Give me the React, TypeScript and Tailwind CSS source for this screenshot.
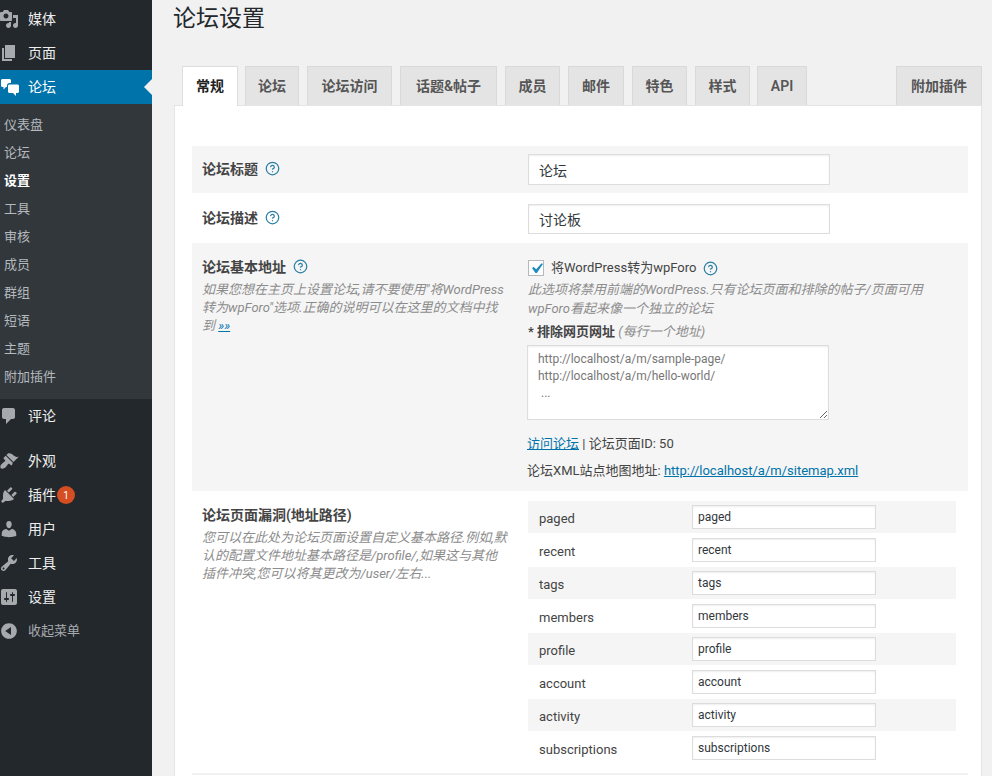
import { CircleHelp } from 'lucide-react'

const font = 'font-["Roboto","Noto_Sans_CJK_SC",sans-serif]'

const iconPaths: Record<string, string> = {
  media:
    'M13 11V4c0-.55-.45-1-1-1h-1.67L9 1H5L3.67 3H2c-.55 0-1 .45-1 1v7c0 .55.45 1 1 1h10c.55 0 1-.45 1-1zM7 4.500c1.380 0 2.500 1.120 2.500 2.500S8.380 9.500 7 9.500 4.500 8.380 4.500 7 5.620 4.500 7 4.500zM14 6h5v10.500c0 1.380-1.120 2.500-2.500 2.500S14 17.880 14 16.500s1.120-2.500 2.500-2.500c.17 0 .34.02.5.05V9h-3V6zm-4 8.050V13h2v3.500c0 1.380-1.120 2.500-2.500 2.500S7 17.880 7 16.500 8.120 14 9.500 14c.17 0 .34.02.5.05z',
  page: 'M6 15V2h10v13H6zm-1 1h8v2H3V5h2v11z',
  comments: 'M5 2h9c1.100 0 2 .9 2 2v7c0 1.100-.9 2-2 2h-2l-5 5v-5H5c-1.100 0-2-.9-2-2V4c0-1.100.9-2 2-2z',
  appearance:
    'M14.480 11.060L7.410 3.990l1.500-1.500c.5-.56 2.300-.47 3.510.32 1.210.8 1.430 1.280 2.910 2.100 1.180.64 2.450 1.260 4.450.85zm-.71.71L6.700 4.700 4.930 6.470c-.39.39-.39 1.020 0 1.410l1.060 1.060c.39.39.39 1.030 0 1.420-.6.6-1.430 1.110-2.210 1.690-.35.26-.7.53-1.010.84C1.430 13.710.960 15.910 1.670 17.330c1.420.71 3.620.24 4.960-1.100.31-.31.58-.66.84-1.010.58-.78 1.090-1.610 1.690-2.210.39-.39 1.030-.39 1.420 0l1.060 1.060c.39.39 1.020.39 1.410 0z',
  plugins:
    'M13.110 4.360L9.870 7.600 8 5.730l3.240-3.240c.35-.34 1.050-.2 1.560.32.52.51.66 1.210.31 1.550zm-8 1.770l.91-1.120 9.010 9.010-1.190.84c-.71.71-2.630 1.160-3.820 1.160H6.140L4.900 17.260c-.59.59-1.540.59-2.120 0-.59-.58-.59-1.530 0-2.120l1.240-1.240v-3.880c0-1.130.4-3.190 1.090-3.890zm7.260 3.970l3.240-3.240c.34-.35 1.040-.21 1.550.31.52.51.66 1.210.31 1.550l-3.240 3.250z',
  users:
    'M10 9.250c-2.270 0-2.730-3.440-2.730-3.440C7 4.020 7.820 2 9.970 2c2.160 0 2.980 2.020 2.710 3.810 0 0-.41 3.440-2.680 3.440zm0 2.570L12.720 10c2.390 0 4.520 2.330 4.520 4.530v2.490s-3.650 1.130-7.240 1.130c-3.650 0-7.240-1.130-7.240-1.130v-2.490c0-2.250 1.940-4.480 4.470-4.480z',
  tools:
    'M16.680 9.770c-1.340 1.340-3.300 1.670-4.950.99l-5.410 6.520c-.99.99-2.590.99-3.580 0s-.99-2.590 0-3.570l6.520-5.420c-.68-1.650-.35-3.610.99-4.950 1.280-1.280 3.120-1.620 4.720-1.060l-2.890 2.890 2.820 2.820 2.860-2.870c.53 1.580.18 3.390-1.080 4.650zM3.810 16.210c.4.39 1.040.39 1.430 0 .4-.4.4-1.040 0-1.430-.39-.4-1.030-.4-1.430 0-.39.39-.39 1.030 0 1.430z',
  settings:
    'M18 16V4c0-1.100-.9-2-2-2H4c-1.100 0-2 .9-2 2v12c0 1.100.9 2 2 2h12c1.100 0 2-.9 2-2zM8 11h1c.55 0 1 .45 1 1s-.45 1-1 1H8v1.500c0 .28-.22.5-.5.5s-.5-.22-.5-.5V13H6c-.55 0-1-.45-1-1s.45-1 1-1h1V5.500c0-.28.22-.5.5-.5s.5.22.5.5V11zm5-2h-1c-.55 0-1-.45-1-1s.45-1 1-1h1V5.500c0-.28.22-.5.5-.5s.5.22.5.5V7h1c.55 0 1 .45 1 1s-.45 1-1 1h-1v5.500c0 .28-.22.5-.5.5s-.5-.22-.5-.5V9z',
  collapse:
    'M10 2.160c4.330 0 7.840 3.510 7.840 7.840s-3.510 7.840-7.840 7.840S2.160 14.330 2.160 10 5.670 2.160 10 2.160zm2 11.720V6.120L6.180 9.990z',
  forum:
    'M2 3.500C2 2.700 2.700 2 3.500 2h7c.8 0 1.500.7 1.500 1.500V6H10.500C9.100 6 8 7.100 8 8.500V10H7l-2.500 2.500V10h-1C2.700 10 2 9.300 2 8.500zM10.500 7.500h8c.8 0 1.500.7 1.500 1.500v5.500c0 .8-.7 1.500-1.500 1.500H17v3l-3-3h-3.500C9.700 16 9 15.300 9 14.500V9c0-.8.7-1.500 1.500-1.500z',
}

function MenuIcon({ name, color = 'text-[#a7aaad]' }: { name: string; color?: string }) {
  return (
    <svg viewBox="0 0 20 20" className={`h-5 w-5 shrink-0 fill-current ${color}`}>
      <path d={iconPaths[name]} />
    </svg>
  )
}

function MenuItem({ icon, label, badge }: { icon: string; label: string; badge?: string }) {
  return (
    <div className="flex h-[34px] items-center">
      <div className="ml-[-1px] mr-[9px]">
        <MenuIcon name={icon} />
      </div>
      <span className="text-[#eeeeee]">{label}</span>
      {badge && (
        <span className="ml-px flex h-[18px] w-[18px] items-center justify-center rounded-full bg-[#d54e21] text-[10px] text-white">
          {badge}
        </span>
      )}
    </div>
  )
}

const subItems = ['仪表盘', '论坛', '设置', '工具', '审核', '成员', '群组', '短语', '主题', '附加插件']

function Sidebar() {
  return (
    <aside className="w-[152px] shrink-0 bg-[#23282d] pt-[2px] text-[14px]">
      <MenuItem icon="media" label="媒体" />
      <MenuItem icon="page" label="页面" />
      <div className="relative flex h-[34px] items-center bg-[#0073aa] text-white">
        <div className="ml-[-1px] mr-[9px]">
          <MenuIcon name="forum" color="text-white" />
        </div>
        <span>论坛</span>
        <span className="absolute right-0 top-[9px] border-y-[8px] border-r-[8px] border-y-transparent border-r-[#f1f1f1]" />
      </div>
      <div className="bg-[#32373c] pb-[8px] pt-[7px] text-[13px] text-[#b4b9be]">
        {subItems.map((item) => (
          <div
            key={item}
            className={`flex h-[28px] items-center pl-[4px] ${item === '设置' ? 'font-bold text-white' : ''}`}
          >
            {item}
          </div>
        ))}
      </div>
      <MenuItem icon="comments" label="评论" />
      <div className="h-[11px]" />
      <MenuItem icon="appearance" label="外观" />
      <MenuItem icon="plugins" label="插件" badge="1" />
      <MenuItem icon="users" label="用户" />
      <MenuItem icon="tools" label="工具" />
      <MenuItem icon="settings" label="设置" />
      <div className="flex h-[34px] items-center text-[13px] text-[#a7aaad]">
        <div className="ml-[-1px] mr-[9px]">
          <MenuIcon name="collapse" />
        </div>
        收起菜单
      </div>
    </aside>
  )
}

const tabs = [
  { label: '论坛', width: 'w-[54px]', gap: 'ml-[7px]' },
  { label: '论坛访问', width: 'w-[85px]', gap: 'ml-[8px]' },
  { label: '话题&帖子', width: 'w-[97px]', gap: 'ml-[8px]' },
  { label: '成员', width: 'w-[55px]', gap: 'ml-[8px]' },
  { label: '邮件', width: 'w-[56px]', gap: 'ml-[8px]' },
  { label: '特色', width: 'w-[55px]', gap: 'ml-[8px]' },
  { label: '样式', width: 'w-[55px]', gap: 'ml-[8px]' },
  { label: 'API', width: 'w-[50px]', gap: 'ml-[7px]' },
]

const tabClass =
  'flex h-[39px] items-center justify-center border border-b-0 border-[#d9d9d9] bg-[#e4e4e4] text-[14px] font-semibold text-[#555555]'

function Tabs() {
  return (
    <div className="relative z-10 flex pl-[8px]">
      <div className="flex h-[40px] w-[56px] items-center justify-center border border-b-0 border-[#dddddd] bg-white text-[14px] font-bold text-[#222222]">
        常规
      </div>
      {tabs.map((tab) => (
        <div key={tab.label} className={`${tabClass} ${tab.width} ${tab.gap}`}>
          {tab.label}
        </div>
      ))}
      <div className={`${tabClass} ml-auto w-[86px]`}>附加插件</div>
    </div>
  )
}

function Help() {
  return <CircleHelp className="mt-px h-[15px] w-[15px] shrink-0 text-[#2a7fa5]" strokeWidth={2} />
}

const inputClass =
  'block border border-[#dddddd] bg-white text-[#32373c] shadow-[inset_0_1px_2px_rgba(0,0,0,0.07)] outline-none'

const slugs = ['paged', 'recent', 'tags', 'members', 'profile', 'account', 'activity', 'subscriptions']

function SlugTable() {
  return (
    <div className="w-[428px]">
      {slugs.map((slug, i) => (
        <div key={slug} className={`mb-px flex h-[32px] items-center ${i % 2 === 0 ? 'bg-[#f5f5f5]' : ''}`}>
          <div className="w-[164px] pl-[11px] pt-[4px] text-[13px] text-[#444444]">{slug}</div>
          <input readOnly value={slug} className={`${inputClass} h-[24px] w-[184px] px-[5px] text-[12px]`} />
        </div>
      ))}
    </div>
  )
}

export default function App() {
  return (
    <div className={`flex h-[776px] w-[992px] overflow-hidden bg-[#f1f1f1] ${font}`}>
      <Sidebar />
      <main className="min-w-0 flex-1 pl-[22px] pr-[10px]">
        <h1 className="ml-[-1px] h-[66px] pt-[2px] text-[23px] leading-[34px] text-[#23282d]">论坛设置</h1>
        <Tabs />
        <div className="mt-[-1px] h-[700px] border border-[#e5e5e5] bg-white pl-[17px] pr-[13px] pt-[40px] text-[13px] text-[#444444]">
          {/* 论坛标题 */}
          <div className="flex h-[47px] bg-[#f5f5f5]">
            <div className="flex w-[336px] items-start gap-[7px] pl-[10px] pt-[14px] text-[14px] font-semibold leading-[18px]">
              论坛标题 <Help />
            </div>
            <input readOnly value="论坛" className={`${inputClass} mt-[8px] h-[31px] w-[302px] px-[10px] text-[14px]`} />
          </div>

          {/* 论坛描述 */}
          <div className="flex h-[50px]">
            <div className="flex w-[336px] items-start gap-[7px] pl-[10px] pt-[16px] text-[14px] font-semibold leading-[18px]">
              论坛描述 <Help />
            </div>
            <input readOnly value="讨论板" className={`${inputClass} mt-[11px] h-[30px] w-[302px] px-[10px] text-[14px]`} />
          </div>

          {/* 论坛基本地址 */}
          <div className="flex h-[248px] bg-[#f5f5f5]">
            <div className="w-[336px] pl-[10px] pt-[15px]">
              <div className="flex items-start gap-[7px] text-[14px] font-semibold leading-[18px]">
                论坛基本地址 <Help />
              </div>
              <p className="mt-[5px] text-[13px] italic leading-[18px] text-[#8c8c8c]">
                如果您想在主页上设置论坛,请不要使用"将WordPress
                <br />
                转为wpForo"选项.正确的说明可以在这里的文档中找
                <br />
                到 <span className="text-[#0073aa] underline">»»</span>
              </p>
            </div>
            <div className="pt-[17px]">
              <div className="flex items-center leading-[16px]">
                <span className="flex h-[16px] w-[16px] items-center justify-center border border-[#b4b9be] bg-white">
                  <svg viewBox="0 0 20 20" className="h-[21px] w-[21px] shrink-0 fill-[#1e8cbe]">
                    <path d="M14.830 4.890l1.340.94-5.810 8.380H9.020L5.780 9.670l1.340-1.250 2.570 2.400z" />
                  </svg>
                </span>
                <span className="ml-[7px] mr-[7px]">将WordPress转为wpForo</span>
                <Help />
              </div>
              <p className="mt-[4px] text-[13px] italic leading-[19px] text-[#8c8c8c]">
                此选项将禁用前端的WordPress.只有论坛页面和排除的帖子/页面可用
                <br />
                wpForo看起来像一个独立的论坛
              </p>
              <div className="mt-[4px] leading-[19px]">
                <span className="font-semibold">* 排除网页网址</span>{' '}
                <span className="italic text-[#8c8c8c]">(每行一个地址)</span>
              </div>
              <textarea
                readOnly
                value={'http://localhost/a/m/sample-page/\nhttp://localhost/a/m/hello-world/\n ...'}
                className={`${inputClass} ml-[-1px] mt-[4px] h-[75px] w-[302px] px-[10px] pt-[5px] text-[12px] leading-[17px] text-[#777777]`}
              />
              <div className="ml-[-1px] mt-[15px] leading-[18px]">
                <span className="text-[#0073aa] underline">访问论坛</span> | 论坛页面ID: 50
              </div>
              <div className="ml-[-1px] mt-[9px] leading-[18px]">
                论坛XML站点地图地址: <span className="text-[#0073aa] underline">http://localhost/a/m/sitemap.xml</span>
              </div>
            </div>
          </div>

          {/* 论坛页面漏洞 */}
          <div className="flex h-[284px] border-b-2 border-[#f1f1f1] pt-[10px]">
            <div className="w-[336px] pl-[10px] pt-[5px]">
              <div className="text-[14px] font-semibold leading-[18px]">论坛页面漏洞(地址路径)</div>
              <p className="mt-[5px] text-[13px] italic leading-[18px] text-[#8c8c8c]">
                您可以在此处为论坛页面设置自定义基本路径.例如,默
                <br />
                认的配置文件地址基本路径是/profile/,如果这与其他
                <br />
                插件冲突,您可以将其更改为/user/左右...
              </p>
            </div>
            <SlugTable />
          </div>
        </div>
      </main>
    </div>
  )
}
